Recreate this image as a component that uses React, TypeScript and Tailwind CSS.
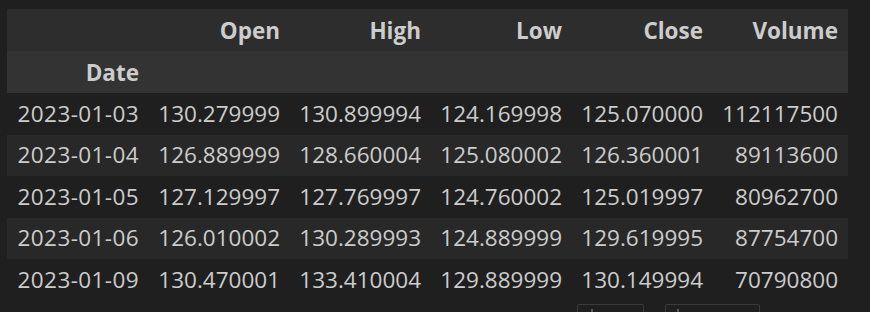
import React from "react";

const rows = [
  ["2023-01-03", "130.279999", "130.899994", "124.169998", "125.070000", "112117500"],
  ["2023-01-04", "126.889999", "128.660004", "125.080002", "126.360001", "89113600"],
  ["2023-01-05", "127.129997", "127.769997", "124.760002", "125.019997", "80962700"],
  ["2023-01-06", "126.010002", "130.289993", "124.889999", "129.619995", "87754700"],
  ["2023-01-09", "130.470001", "133.410004", "129.889999", "130.149994", "70790800"],
];

export default function App() {
  return (
    <div
      className="w-[870px] h-[312px] overflow-hidden bg-[#1f1f1f] text-[#cccccc] pt-[9px] pl-[7px]"
      style={{ fontFamily: '"Open Sans", "Noto Sans", sans-serif' }}
    >
      <table className="border-collapse text-[22.5px] leading-none">
        <thead>
          <tr className="bg-[#2d2d2d] h-[42px] font-bold">
            <th className="w-[142px] pr-[10px] pt-[3px]"></th>
            <th className="w-[141px] text-right pr-[10px] pt-[3px]">Open</th>
            <th className="w-[141px] text-right pr-[10px] pt-[3px]">High</th>
            <th className="w-[141px] text-right pr-[10px] pt-[3px]">Low</th>
            <th className="w-[141px] text-right pr-[10px] pt-[3px]">Close</th>
            <th className="w-[135px] text-right pr-[10px] pt-[3px]">Volume</th>
          </tr>
          <tr className="bg-[#333333] h-[42px] font-bold">
            <th className="text-right pr-[10px] pt-[3px]">Date</th>
            <th></th>
            <th></th>
            <th></th>
            <th></th>
            <th></th>
          </tr>
        </thead>
        <tbody>
          {rows.map((r, i) => (
            <tr key={r[0]} className={`h-[41.5px] ${i % 2 === 1 ? "bg-[#282828]" : ""}`}>
              {r.map((c, j) => (
                <td
                  key={j}
                  className={`text-right pr-[10px] whitespace-nowrap ${j === 0 ? "tracking-[0.4px]" : ""}`}
                >
                  {c}
                </td>
              ))}
            </tr>
          ))}
        </tbody>
      </table>
      <div className="flex gap-[21px] pl-[570px] mt-[3px]">
        <div className="w-[67px] h-[12px] border border-[#3a3a3a] rounded-t-[2px] pl-[13px] pt-[4px]">
          <div className="w-[2px] h-[6px] bg-[#5a5a5a]" />
        </div>
        <div className="w-[95px] h-[12px] border border-[#3a3a3a] rounded-t-[2px] pl-[11px] pt-[4px]">
          <div className="w-[2px] h-[6px] bg-[#5a5a5a]" />
        </div>
      </div>
    </div>
  );
}
